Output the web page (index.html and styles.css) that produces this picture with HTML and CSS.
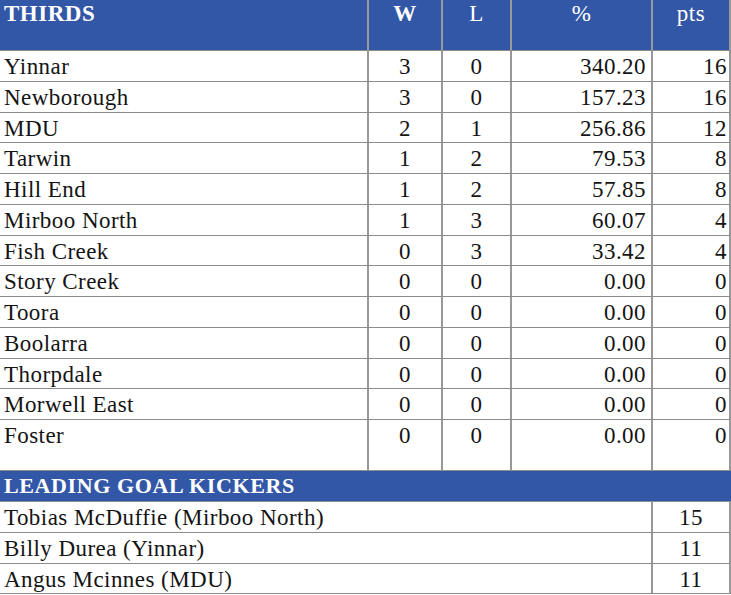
FILE: index.html
```
<!DOCTYPE html>
<html>
<head>
<meta charset="utf-8">
<link rel="stylesheet" href="styles.css">
</head>
<body>
<div class="ladder">
  <div class="row head">
    <div class="c name">THIRDS</div>
    <div class="c num bold">W</div>
    <div class="c num">L</div>
    <div class="c num">%</div>
    <div class="c num">pts</div>
  </div>
  <div class="row"><div class="c name">Yinnar</div><div class="c num">3</div><div class="c num">0</div><div class="c pct">340.20</div><div class="c pts">16</div></div>
  <div class="row"><div class="c name">Newborough</div><div class="c num">3</div><div class="c num">0</div><div class="c pct">157.23</div><div class="c pts">16</div></div>
  <div class="row"><div class="c name">MDU</div><div class="c num">2</div><div class="c num">1</div><div class="c pct">256.86</div><div class="c pts">12</div></div>
  <div class="row"><div class="c name">Tarwin</div><div class="c num">1</div><div class="c num">2</div><div class="c pct">79.53</div><div class="c pts">8</div></div>
  <div class="row"><div class="c name">Hill End</div><div class="c num">1</div><div class="c num">2</div><div class="c pct">57.85</div><div class="c pts">8</div></div>
  <div class="row"><div class="c name">Mirboo North</div><div class="c num">1</div><div class="c num">3</div><div class="c pct">60.07</div><div class="c pts">4</div></div>
  <div class="row"><div class="c name">Fish Creek</div><div class="c num">0</div><div class="c num">3</div><div class="c pct">33.42</div><div class="c pts">4</div></div>
  <div class="row"><div class="c name">Story Creek</div><div class="c num">0</div><div class="c num">0</div><div class="c pct">0.00</div><div class="c pts">0</div></div>
  <div class="row"><div class="c name">Toora</div><div class="c num">0</div><div class="c num">0</div><div class="c pct">0.00</div><div class="c pts">0</div></div>
  <div class="row"><div class="c name">Boolarra</div><div class="c num">0</div><div class="c num">0</div><div class="c pct">0.00</div><div class="c pts">0</div></div>
  <div class="row"><div class="c name">Thorpdale</div><div class="c num">0</div><div class="c num">0</div><div class="c pct">0.00</div><div class="c pts">0</div></div>
  <div class="row"><div class="c name">Morwell East</div><div class="c num">0</div><div class="c num">0</div><div class="c pct">0.00</div><div class="c pts">0</div></div>
  <div class="row last"><div class="c name">Foster</div><div class="c num">0</div><div class="c num">0</div><div class="c pct">0.00</div><div class="c pts">0</div></div>

  <div class="subhead">LEADING GOAL KICKERS</div>
  <div class="krow"><div class="c name">Tobias McDuffie (Mirboo North)</div><div class="c num">15</div></div>
  <div class="krow"><div class="c name">Billy Durea (Yinnar)</div><div class="c num">11</div></div>
  <div class="krow"><div class="c name">Angus Mcinnes (MDU)</div><div class="c num">11</div></div>
</div>
</body>
</html>
```
FILE: styles.css
```
html, body {
  margin: 0;
  padding: 0;
  background: #ffffff;
}
body {
  font-family: "Liberation Serif", "Times New Roman", serif;
  font-size: 23px;
  letter-spacing: 0.45px;
  color: #141414;
}
.ladder {
  width: 731px;
}
.row {
  display: grid;
  grid-template-columns: 367px 74px 69px 141px 80px;
  height: 30.75px;
  box-sizing: border-box;
  border-bottom: 1px solid #8c8c8c;
}
.row.head {
  height: 51px;
  background: #3357a7;
  color: #ffffff;
  border-bottom: 1px solid #8c8c8c;
}
.row.last {
  height: 51px;
  border-bottom: 1px solid #8c8c8c;
}
.c {
  box-sizing: border-box;
  line-height: 24px;
  padding-top: 4px;
  white-space: nowrap;
  overflow: hidden;
}
.row .c + .c {
  border-left: 2px solid #999999;
}
.row .c:last-child {
  border-right: 2px solid #999999;
}
.name {
  padding-left: 4px;
}
.num {
  text-align: center;
}
.pct {
  text-align: right;
  padding-right: 5px;
}
.pts {
  text-align: right;
  padding-right: 2px;
}
.head .c {
  font-size: 23px;
  letter-spacing: 0.5px;
  padding-top: 2px;
}
.head .name,
.head .bold {
  font-weight: bold;
}
.subhead {
  height: 31px;
  box-sizing: border-box;
  background: #3357a7;
  color: #ffffff;
  font-weight: bold;
  font-size: 22px;
  letter-spacing: 0.6px;
  line-height: 24px;
  padding: 3px 0 0 4px;
  border-bottom: 1px solid #8c8c8c;
}
.krow {
  display: grid;
  grid-template-columns: 651px 80px;
  height: 30.75px;
  box-sizing: border-box;
  border-bottom: 1px solid #8c8c8c;
}
.krow .c + .c {
  border-left: 2px solid #999999;
  border-right: 2px solid #999999;
}
```
